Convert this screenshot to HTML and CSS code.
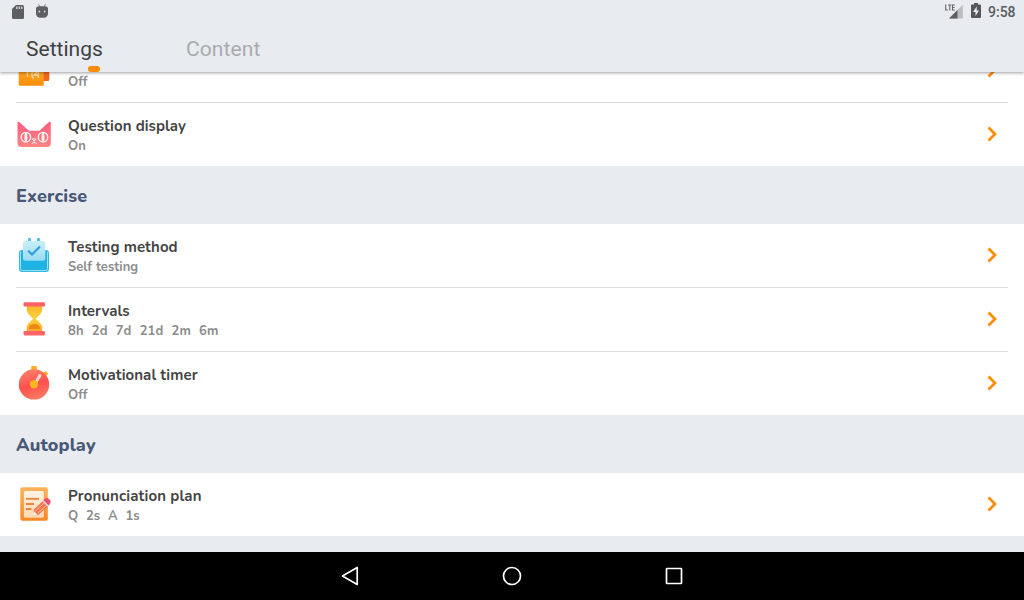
FILE: index.html
```html
<!DOCTYPE html>
<html lang="en">
<head>
<meta charset="utf-8">
<title>Settings</title>
<link rel="stylesheet" href="styles.css">
</head>
<body>
<svg class="defs" width="0" height="0" aria-hidden="true">
  <defs>
    <linearGradient id="gOrange" x2="0" y2="1"><stop offset="0" stop-color="#ffb733"/><stop offset="1" stop-color="#f98d08"/></linearGradient>
    <linearGradient id="gCat" x2="0" y2="1"><stop offset="0" stop-color="#ff5c83"/><stop offset="1" stop-color="#ff8482"/></linearGradient>
    <linearGradient id="gPage" x2="0" y2="1"><stop offset="0" stop-color="#c9eff9"/><stop offset="1" stop-color="#98dcf3"/></linearGradient>
    <linearGradient id="gSand" x2="0" y2="1"><stop offset="0" stop-color="#f9b52c"/><stop offset=".5" stop-color="#ffd238"/><stop offset="1" stop-color="#fba62c"/></linearGradient>
    <linearGradient id="gRed" x2=".3" y2="1"><stop offset="0" stop-color="#ff8a70"/><stop offset=".6" stop-color="#ff504e"/><stop offset="1" stop-color="#ff745f"/></linearGradient>
    <linearGradient id="gBoard" x2="0" y2="1"><stop offset="0" stop-color="#ffb45b"/><stop offset="1" stop-color="#f98625"/></linearGradient>
    <linearGradient id="gPaper" x2="0" y2="1"><stop offset="0" stop-color="#fff3e4"/><stop offset="1" stop-color="#ffd9b5"/></linearGradient>
    <symbol id="chevron" viewBox="0 0 12 16"><path d="M2.500 1.500 9 8l-6.500 6.500" fill="none" stroke="#ff8c00" stroke-width="2.700"/></symbol>
  </defs>
</svg>
<div class="screen">
  <header class="header">
    <div class="status">
      <div class="status-group left">
        <svg width="12" height="14" viewBox="0 0 12 14"><path d="M4 0h6.500Q12 0 12 1.500v11q0 1.500-1.500 1.500h-9Q0 14 0 12.500V4z" fill="#5d5f61"/><path d="M4.800 1.500v2.500M7.300 1.500v2.500M9.800 1.500v2.500" stroke="#e8ebf0" stroke-width="1.200"/></svg>
        <svg class="droid" width="12" height="14" viewBox="0 0 12 14"><path d="M2.500 0 4 3M9.500 0 8 3" stroke="#8b8d90"/><path d="M0 5q0-2.800 3-2.800h6q3 0 3 2.800v4q0 4.700-4.500 4.700h-3Q0 13.700 0 9z" fill="#5d5f61"/><circle cx="3.300" cy="7.500" r=".9" fill="#d5d8dc"/><circle cx="8.700" cy="7.500" r=".9" fill="#d5d8dc"/></svg>
      </div>
      <div class="status-group">
        <svg width="18" height="16" viewBox="0 0 18 16"><path d="M4 15.500 17.800 1.700V15.500z" fill="#babdc1"/><path d="M4 15.500 12.500 7V15.500z" fill="#5d5f61"/><path d="M.7 1.500v5.500h2.300M3 2h3.500M4.800 2v5.500M9.800 2H7.500v5h2.300M7.500 4.500h2" fill="none" stroke="#67696c" stroke-width="1.100"/></svg>
        <svg width="10" height="15" viewBox="0 0 10 15"><path d="M3 0h4v1.500h2q1 0 1 1V14q0 1-1 1H1q-1 0-1-1V2.500q0-1 1-1h2z" fill="#55575a"/><path d="M5.700 3.500 2 9h2.500v4L8 7.500H5.700z" fill="#e8ebf0"/></svg>
        <span class="clock">9:58</span>
      </div>
    </div>
    <nav class="tabs">
      <span class="tab active">Settings</span>
      <span class="tab">Content</span>
    </nav>
  </header>
  <main class="list">
    <div class="row first">
      <svg class="icon" viewBox="0 0 36 36"><path d="M25 8h8.300v18.500q0 1.500-1.500 1.500H25z" fill="#f2651c"/><path d="M2.700 8h25v23.500q0 1.200-1.200 1.200h-22.600q-1.200 0-1.200-1.200z" fill="url(#gOrange)"/><path d="M11.500 16v8M16 15v7.500q0 2 2 3M22.300 16v9M22.300 17l-4 5h4" fill="none" stroke="#ffdca5" stroke-width="1.400"/></svg>
      <div class="text"><span class="title"></span><span class="value">Off</span></div>
      <svg class="chevron"><use href="#chevron"/></svg>
    </div>
    <div class="row">
      <svg class="icon" viewBox="0 0 36 36"><path d="M1.500 5.300q.7-1.300 2 0l9.500 8.500h10.300L32.800 5.300q1.300-1 2 .2V26q0 4-4 4H5.500q-4 0-4-4z" fill="url(#gCat)"/><g fill="#ff7180" stroke="#fff1ed" stroke-width="1.500"><circle cx="9.900" cy="20.200" r="4.700"/><circle cx="27" cy="20.200" r="4.700"/></g><g fill="#fff1ed"><ellipse cx="9.900" cy="20.200" rx="1.500" ry="4.500"/><ellipse cx="27" cy="20.200" rx="1.500" ry="4.500"/></g><path d="M16.200 22h4l-2 2zM18.200 23.500v2M15.800 27q.2-1.500 2.400-1.500t2.400 1.500" stroke="#fff1ed" fill="none"/></svg>
      <div class="text"><span class="title">Question display</span><span class="value">On</span></div>
      <svg class="chevron"><use href="#chevron"/></svg>
    </div>
    <h2 class="section">Exercise</h2>
    <div class="row">
      <svg class="icon" viewBox="0 0 36 36"><rect x="12" y="0" width="3" height="4" rx="1" fill="#4fc1ea"/><rect x="21" y="0" width="3" height="4" rx="1" fill="#4fc1ea"/><path d="M6 12h24q3 0 3 3v16q0 3-3 3H6q-3 0-3-3V15q0-3 3-3z" fill="#36b8e6"/><path d="M4.500 14v16.500q0 2 2 2h23q2 0 2-2V14" fill="#1fb2e4" stroke="#9be0f5"/><rect x="7" y="3" width="22.300" height="19.700" rx="2.500" fill="url(#gPage)"/><path d="m12.200 12.800 3.800 3.700 8-8" fill="none" stroke="#329ce1" stroke-width="2.200"/></svg>
      <div class="text"><span class="title">Testing method</span><span class="value">Self testing</span></div>
      <svg class="chevron"><use href="#chevron"/></svg>
    </div>
    <div class="row">
      <svg class="icon" viewBox="0 0 36 36"><path d="M10.700 4h15.500v4.500q0 2.500-6.500 8.200 6.500 5.800 6.500 8.300v4H10.700v-4q0-2.500 6.500-8.300-6.500-5.700-6.500-8.200z" fill="url(#gSand)"/><path d="M13 27v-1.500q1-3.500 5.500-3.500t5.500 3.500V27z" fill="#e98a16"/><rect x="7.500" y=".3" width="21.500" height="4.200" rx="1.300" fill="#ff6265"/><rect x="7.500" y="29" width="21.500" height="4.400" rx="1.300" fill="#ff6568"/></svg>
      <div class="text"><span class="title">Intervals</span><span class="value wide">8h  2d  7d  21d  2m  6m</span></div>
      <svg class="chevron"><use href="#chevron"/></svg>
    </div>
    <div class="row">
      <svg class="icon" viewBox="0 0 36 36"><rect x="15.200" y="0" width="5.600" height="5" rx="1" fill="#f9b128"/><path d="m27 7 2.500-2 2.800 2.700-2 2.500z" fill="#f9b128"/><circle cx="18" cy="18.400" r="15.200" fill="url(#gRed)"/><path d="m18.200 16.500 4.300-7.700q1-1.400 2.300-.4 1.200 1 .1 2.700l-4.500 7z" fill="#ffd7cf"/><circle cx="18" cy="18.200" r="4.200" fill="#ffb51d"/></svg>
      <div class="text"><span class="title">Motivational timer</span><span class="value">Off</span></div>
      <svg class="chevron"><use href="#chevron"/></svg>
    </div>
    <h2 class="section">Autoplay</h2>
    <div class="row">
      <svg class="icon" viewBox="0 0 36 36"><rect x="4.300" y=".2" width="27.500" height="33.600" rx="2" fill="url(#gBoard)"/><rect x="7.900" y="4" width="20" height="26.700" rx="1.500" fill="url(#gPaper)"/><path d="M10 11.800h13M10 17h8M10 22h5.500" stroke="#f18439" stroke-width="1.800"/><path d="m16.700 28.800 1-6L28.500 12.300l5.200 5.200L22.700 27.700z" fill="#f7744f"/><path d="m16.700 28.800.9-5 3.900 4z" fill="#fff0e2"/><path d="m19.500 24 9-8.500M22 26.200l9-8.500" stroke="#ffc3a4" stroke-width="1"/><path d="m27.500 13 1.500-1.300q2-1.700 4.300.6t.7 4.200l-1.500 1.500z" fill="#ea4e75"/><path d="m26.800 13.800 5 5" stroke="#dfdce9" stroke-width="1.300"/></svg>
      <div class="text"><span class="title plan">Pronunciation plan</span><span class="value">Q  2s  A  1s</span></div>
      <svg class="chevron"><use href="#chevron"/></svg>
    </div>
  </main>
  <footer class="navbar">
    <svg width="24" height="24" viewBox="0 0 24 24"><path d="M19.200 3.500v17L4.500 12z"/></svg>
    <svg width="24" height="24" viewBox="0 0 24 24"><circle cx="12" cy="12" r="8.500"/></svg>
    <svg width="24" height="24" viewBox="0 0 24 24"><rect x="4.500" y="4.500" width="15" height="15" rx=".5"/></svg>
  </footer>
</div>
</body>
</html>
```
FILE: styles.css
```css
* { box-sizing: border-box; }
body { margin: 0; font-family: Nunito, "Open Sans", sans-serif; }
.defs { display: block; }
.screen { width: 1024px; height: 600px; display: flex; flex-direction: column; overflow: hidden; background: #e8ebf0; }
.header { position: relative; z-index: 1; height: 72px; flex: none; background: #e8ebf0; box-shadow: 0 1px 3px rgba(0,0,0,.38); font-family: Roboto, sans-serif; }
.status { height: 24px; display: flex; justify-content: space-between; padding: 0 8px 0 12px; }
.status-group { display: flex; align-items: flex-start; gap: 8px; padding-top: 3px; }
.status-group.left { gap: 12px; padding-top: 5px; }
.droid { margin-top: -1px; }
.clock { font-size: 14px; font-weight: 500; line-height: 19px; color: #595b5e; width: 28px; margin-left: -1px; white-space: nowrap; }
.tabs { display: flex; height: 48px; padding-left: 26px; font-size: 21px; line-height: 50px; letter-spacing: .1px; color: #a9abaf; }
.tab { width: 160px; }
.tab.active { position: relative; color: #404143; letter-spacing: .03px; }
.tab.active::after { content: ""; position: absolute; left: 62px; top: 42px; width: 12px; height: 6px; border-radius: 3px; background: #ff8c00; }
.list { flex: 1; overflow: hidden; min-height: 0; }
.row { height: 63px; display: flex; align-items: flex-start; padding: 14px 26px 0 16px; background: #fff; }
.row.first { margin-top: -33px; }
.row + .row { height: 64px; padding-top: 15px; background: linear-gradient(#dcdcdc, #dcdcdc) 16px 0 / 992px 1px no-repeat #fff; }
.icon { width: 36px; height: 36px; flex: none; }
.text { display: flex; flex-direction: column; flex: 1; margin: -1px 0 0 16px; white-space: pre; }
.title { height: 20px; font-size: 15px; line-height: 20px; font-weight: 700; letter-spacing: .06px; color: #444; }
.title.plan { letter-spacing: .12px; }
.value { font-size: 13px; line-height: 21px; font-weight: 700; color: #8c8c8c; word-spacing: .4px; }
.value.wide { letter-spacing: .08px; word-spacing: .5px; }
.chevron { width: 12px; height: 16px; margin-top: 9px; flex: none; }
.section { margin: 0; height: 58px; padding: 1px 16px 0; font-size: 18px; line-height: 58px; font-weight: 800; letter-spacing: .15px; color: #4a5878; }
.navbar { height: 48px; flex: none; display: flex; justify-content: center; align-items: center; gap: 138px; background: #000; }
.navbar svg { fill: none; stroke: #fff; stroke-width: 1.7; stroke-linejoin: round; }
```
